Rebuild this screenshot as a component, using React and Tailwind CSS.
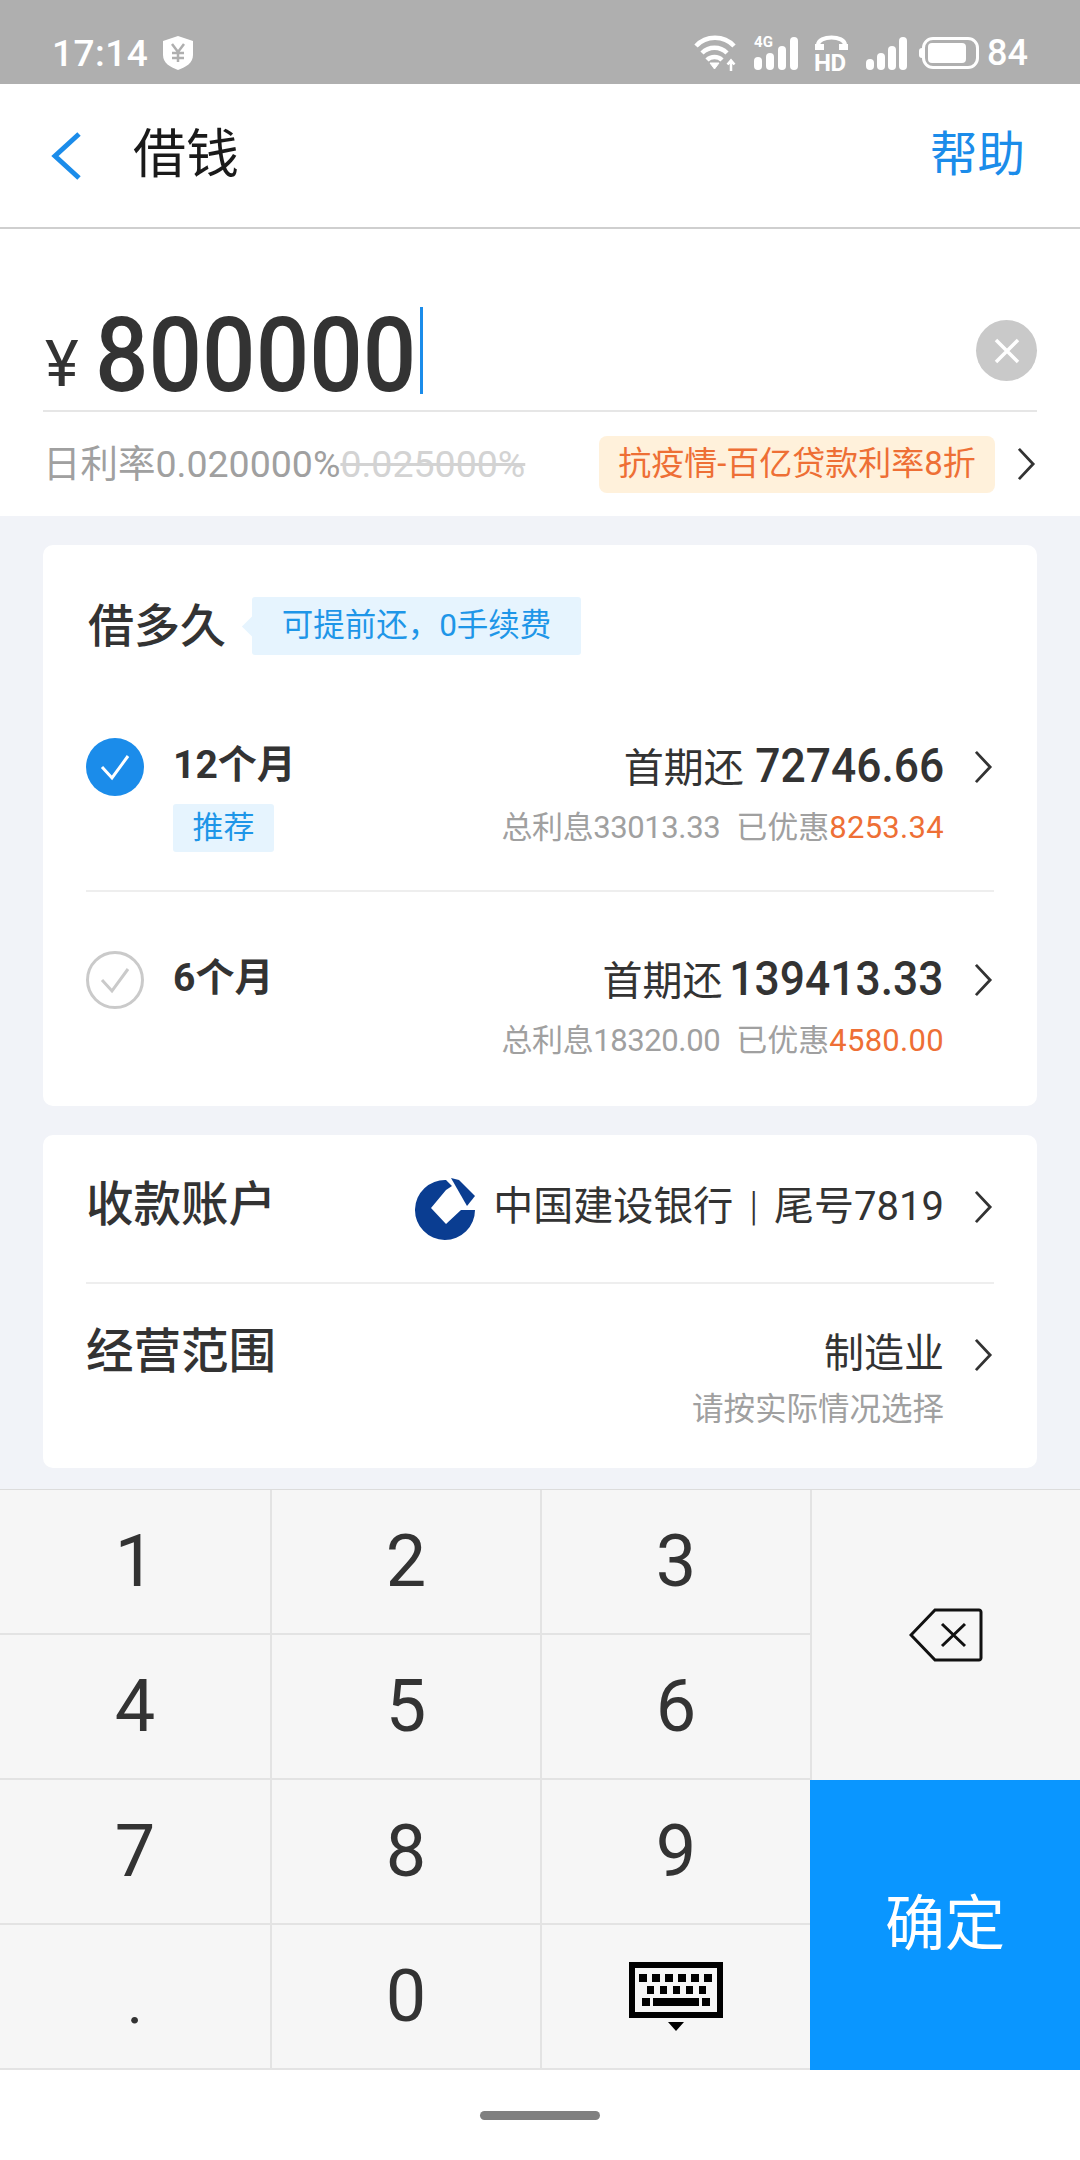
import React from "react";

const FONT = "font-['Roboto','Noto_Sans_CJK_SC',sans-serif]";

function Chevron({ className = "" }) {
  return (
    <svg viewBox="0 0 22 36" className={`h-[34px] w-[21px] ${className}`} fill="none" stroke="#333" strokeWidth="3">
      <path d="M3 2l15 16L3 34" />
    </svg>
  );
}

function Bars({ w, gap, heights }) {
  // signal bars, heights are fixed per bar so classes stay literal
  return (
    <div className={`flex items-end ${gap}`}>
      {heights.map((h, i) => (
        <div key={i} className={`${w} rounded-full bg-white`} style={{ height: h }} />
      ))}
    </div>
  );
}

function StatusIcons() {
  return (
    <div className="flex items-center">
      {/* wifi */}
      <svg viewBox="0 0 43 36" className="h-[36px] w-[43px]" fill="none" stroke="#fff" strokeWidth="4.500">
        <path d="M2 11C12 0 30 0 40 11" />
        <path d="M8 18c7-7 18-7 25 0" />
        <path d="M13 25c4-4 11-4 15 0" />
        <path d="M16 28h9l-4.500 6z" fill="#fff" strokeWidth="1" />
        <path d="M37 36V26M33.500 29.500l3.500-4 3.500 4" strokeWidth="2.500" />
      </svg>
      {/* 4G + signal */}
      <div className="relative ml-[17px] h-[36px] w-[44px]">
        <span className="absolute left-0 top-[-1px] text-[15px] font-bold leading-[16px] text-white">4G</span>
        <div className="absolute bottom-[1px] left-0">
          <Bars w="w-[8px]" gap="gap-[4px]" heights={[13, 17, 24, 33]} />
        </div>
      </div>
      {/* HD call */}
      <div className="relative ml-[16px] h-[36px] w-[35px]">
        <svg viewBox="0 0 35 18" className="absolute left-0 top-0 h-[18px] w-[35px]" fill="none" stroke="#fff" strokeWidth="4">
          <path d="M4 12V10C4 0 31 0 31 10v2" />
          <path d="M1 9h9v6H1zM25 9h9v6h-9z" fill="#fff" strokeWidth="0" />
        </svg>
        <span className="absolute bottom-[-3px] left-0 text-[24px] font-bold leading-[22px] tracking-[-0.5px] text-white">HD</span>
      </div>
      {/* signal */}
      <div className="ml-[17px]">
        <Bars w="w-[8px]" gap="gap-[3px]" heights={[11, 17, 24, 33]} />
      </div>
      {/* battery */}
      <div className="ml-[12px] flex items-center">
        <div className="h-[10px] w-[3px] rounded-l-sm bg-white" />
        <div className="h-[32px] w-[57px] rounded-[11px] border-[3px] border-white p-[3px]">
          <div className="h-full w-[84%] rounded-[4px] bg-white" />
        </div>
      </div>
      <span className="ml-[8px] text-[36px] font-medium leading-none text-white">84</span>
    </div>
  );
}

function LoanOption({ checked, months, amount, amountClass, interest, saved, tag }) {
  return (
    <div className="flex items-start">
      <div className="mt-[2px] mr-[29px]">
        {checked ? (
          <div className="flex h-[58px] w-[58px] items-center justify-center rounded-full bg-[#1b8cea]">
            <svg viewBox="0 0 32 28" className="h-[30px] w-[32px]" fill="none" stroke="#fff" strokeWidth="3">
              <path d="M3 14l10 11L29 3" />
            </svg>
          </div>
        ) : (
          <div className="flex h-[58px] w-[58px] items-center justify-center rounded-full border-[3px] border-[#cacaca]">
            <svg viewBox="0 0 32 28" className="h-[30px] w-[32px]" fill="none" stroke="#cacaca" strokeWidth="3">
              <path d="M3 14l10 11L29 3" />
            </svg>
          </div>
        )}
      </div>
      <div className="mt-[4px] flex flex-col items-start">
        <div className="text-[39px] font-bold leading-[50px] text-[#333]">{months}</div>
        {tag && (
          <div className="mt-[14px] flex h-[48px] w-[101px] items-center justify-center rounded-[3px] bg-[#e6f4fe] text-[31px] text-[#1e96e8]">
            {tag}
          </div>
        )}
      </div>
      <div className="ml-auto mt-[5px] flex flex-col items-end">
        <div className="flex items-baseline text-[40px] leading-[50px] text-[#333]">
          <span>首期还</span>
          <span className={`inline-block origin-right scale-x-[0.925] text-[48px] font-medium ${amountClass}`}>{amount}</span>
        </div>
        <div className="mt-[10px] text-[31px] leading-[48px] text-[#a0a0a0]">
          <span className="tracking-[-0.4px]">总利息{interest}</span>
          <span className="ml-[16px]">已优惠</span>
          <span className="tracking-[0.3px] text-[#ee6f35]">{saved}</span>
        </div>
      </div>
      <Chevron className="mt-[14px] ml-[29px]" />
    </div>
  );
}

export default function App() {
  const keys = ["1", "2", "3", "4", "5", "6", "7", "8", "9", ".", "0", "kb"];
  return (
    <div className={`${FONT} flex h-[2160px] w-[1080px] flex-col overflow-hidden bg-[#f1f3f8]`}>
      {/* Status bar */}
      <div className="flex h-[84px] items-center justify-between bg-[#afafaf] pl-[52px] pr-[52px] pt-[22px]">
        <div className="flex items-center">
          <span className="text-[37px] font-medium leading-none tracking-[0.5px] text-white">17:14</span>
          <svg viewBox="0 0 30 34" className="ml-[15px] h-[34px] w-[30px]">
            <path d="M15 0l15 5v14c0 8-7 12-15 15C7 31 0 27 0 19V5z" fill="#fff" />
            <path d="M9 8l6 8 6-8M15 16v10M9 17h12M9 22h12" fill="none" stroke="#afafaf" strokeWidth="2.500" />
          </svg>
        </div>
        <StatusIcons />
      </div>

      {/* Header */}
      <div className="flex h-[145px] items-center border-b-2 border-[#cfcfcf] bg-white pl-[50px] pr-[55px]">
        <svg viewBox="0 0 32 48" className="h-[48px] w-[32px]" fill="none" stroke="#1b8cea" strokeWidth="5">
          <path d="M29 2L5 24l24 22" />
        </svg>
        <div className="ml-[51px] text-[53px] leading-none text-[#1a1a1a]">借钱</div>
        <div className="ml-auto text-[47.500px] leading-none text-[#1b8cea]">帮助</div>
      </div>

      {/* Amount */}
      <div className="h-[287px] bg-white px-[43px]">
        <div className="flex h-[183px] items-end border-b-2 border-[#e6e6e6] pb-[8px]">
          <span className="mb-[5px] ml-[2px] text-[64px] leading-none text-[#333]">¥</span>
          <span className="mb-[-9px] ml-[16px] mr-[-32px] inline-block origin-left scale-x-[0.906] text-[104px] font-medium leading-[110px] text-[#333]">
            800000
          </span>
          <div className="mb-[8px] ml-[3px] h-[87px] w-[3px] bg-[#1b8cea]" />
          <div className="mb-[21px] ml-auto flex h-[61px] w-[61px] items-center justify-center rounded-full bg-[#c9c9c9]">
            <svg viewBox="0 0 28 28" className="h-[28px] w-[28px]" stroke="#fff" strokeWidth="3.500">
              <path d="M3 3l22 22M25 3L3 25" />
            </svg>
          </div>
        </div>
        <div className="mt-[23px] flex items-center">
          <span className="text-[37.500px] leading-[58px] text-[#a0a0a0]">日利率0.020000%</span>
          <span className="text-[37.500px] leading-[58px] text-[#d3d3d3] line-through">0.025000%</span>
          <div className="ml-auto flex h-[57px] w-[396px] items-center justify-center rounded-[8px] bg-[#fff1db] text-[33px] text-[#ee6f35]">
            抗疫情-百亿贷款利率8折
          </div>
          <Chevron className="ml-[21px]" />
        </div>
      </div>

      {/* Term card */}
      <div className="mx-[43px] mt-[29px] h-[561px] rounded-[10px] bg-white px-[43px]">
        <div className="flex items-center pl-[2px] pt-[52px]">
          <div className="text-[46px] font-medium leading-[58px] text-[#333]">借多久</div>
          <div className="relative ml-[26px] flex h-[58px] w-[329px] items-center justify-center rounded-[3px] bg-[#e6f4fe] text-[31.500px] text-[#1e96e8]">
            <div className="absolute left-[-7px] top-[22px] h-[15px] w-[15px] rotate-45 bg-[#e6f4fe]" />
            可提前还，0手续费
          </div>
        </div>
        <div className="mt-[81px] h-[156px] border-b-2 border-[#eeeeee]">
          <LoanOption checked months="12个月" amount="72746.66" amountClass="ml-[-4px]" interest="33013.33" saved="8253.34" tag="推荐" />
        </div>
        <div className="pt-[57px]">
          <LoanOption months="6个月" amount="139413.33" amountClass="ml-[-10px]" interest="18320.00" saved="4580.00" />
        </div>
      </div>

      {/* Account card */}
      <div className="mx-[43px] mt-[29px] h-[333px] rounded-[10px] bg-white px-[43px]">
        <div className="flex h-[149px] items-center border-b-2 border-[#eeeeee]">
          <div className="mb-[6px] text-[47.500px] font-medium leading-none text-[#333]">收款账户</div>
          <svg viewBox="0 0 60 62" className="ml-auto h-[62px] w-[60px]">
            <path d="M31 2A30 30 0 1 0 60 32H46L31 46L16 30L31 12L37 8Z" fill="#0a3d91" />
            <path d="M36 0L44 2L60 18L52 28Z" fill="#0a3d91" />
          </svg>
          <div className="mb-[4px] ml-[18px] flex items-center text-[40px] leading-none text-[#333]">
            <span>中国建设银行</span>
            <span className="mx-[16px] font-light">|</span>
            <span>尾号7819</span>
          </div>
          <Chevron className="mb-[3px] ml-[29px]" />
        </div>
        <div className="flex items-start pt-[40px]">
          <div className="text-[47.500px] font-medium leading-[56px] text-[#333]">经营范围</div>
          <div className="ml-auto mt-[2px] flex flex-col items-end">
            <div className="text-[40px] leading-[56px] text-[#333]">制造业</div>
            <div className="mt-[3px] text-[31.500px] leading-[50px] text-[#a0a0a0]">请按实际情况选择</div>
          </div>
          <Chevron className="ml-[29px] mt-[14px]" />
        </div>
      </div>

      {/* Keypad */}
      <div className="mt-[21px] grid grid-cols-4 grid-rows-[repeat(4,145px)] border-t border-[#dcdcdc] bg-[#f6f6f6]">
        {keys.map((k, i) => (
          <div
            key={k}
            className={`flex items-center justify-center border-b-2 border-[#e3e3e3] text-[72px] leading-none text-[#333] ${i % 3 === 0 ? "col-start-1" : "border-l-2"}`}
          >
            {k === "kb" ? (
              <svg viewBox="0 0 94 69" className="h-[69px] w-[94px]">
                <path d="M3 3h88v50H3z" fill="none" stroke="#000" strokeWidth="6" />
                <path d="M10 12h8v8h-8zM23 12h8v8h-8zM36 12h8v8h-8zM49 12h8v8h-8zM62 12h8v8h-8zM75 12h8v8h-8zM18 24h7v8h-7zM31 24h7v8h-7zM44 24h7v8h-7zM57 24h7v8h-7zM70 24h7v8h-7zM13 36h8v8h-8zM24 36h46v8H24zM73 36h8v8h-8zM39 60h16l-8 9z" fill="#000" />
              </svg>
            ) : k === "." ? (
              <span className="mt-[12px] text-[60px]">.</span>
            ) : (
              k
            )}
          </div>
        ))}
        <div className="col-start-4 row-span-2 row-start-1 flex items-center justify-center border-l-2 border-[#e3e3e3]">
          <svg viewBox="0 0 74 54" className="h-[54px] w-[74px]" fill="none" stroke="#111" strokeWidth="3">
            <path d="M26 2h44c1 0 2 1 2 2v46c0 1-1 2-2 2H26L2 27z" />
            <path d="M33 16l23 22M56 16L33 38" />
          </svg>
        </div>
        <div className="col-start-4 row-span-2 row-start-3 flex items-center justify-center bg-[#0a96ff] text-[60px] text-white">
          确定
        </div>
      </div>

      {/* Home indicator */}
      <div className="flex flex-1 items-center justify-center bg-white">
        <div className="h-[9px] w-[120px] rounded-full bg-[#808080]" />
      </div>
    </div>
  );
}
